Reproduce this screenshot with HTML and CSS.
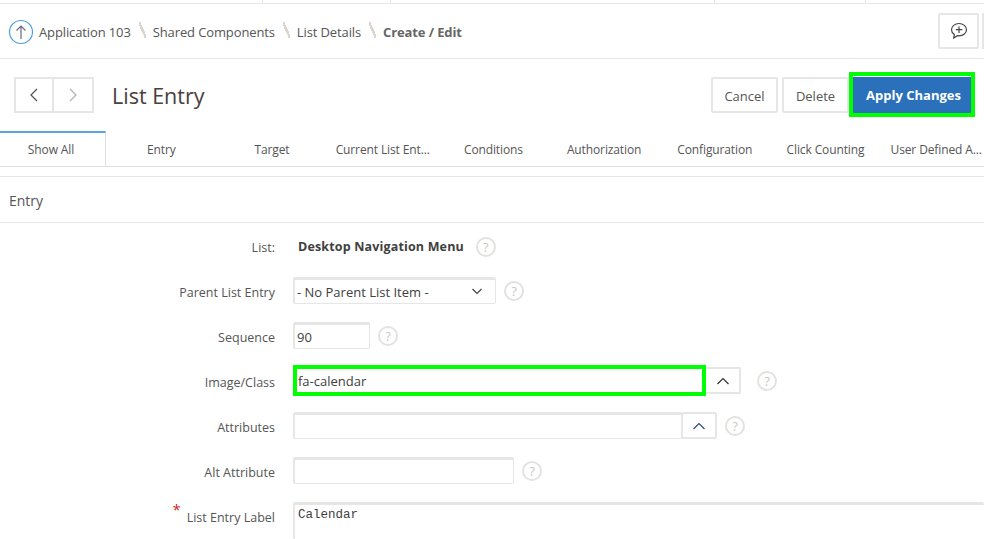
FILE: index.html
```html
<!DOCTYPE html>
<html lang="en">
<head>
  <meta charset="UTF-8">
  <title>List Entry</title>
  <link rel="stylesheet" href="styles.css">
</head>
<body>

  <div class="top-strip">
    <span class="strip-cell strip-a"></span>
    <span class="strip-cell strip-b"></span>
    <span class="strip-cell strip-c"></span>
    <span class="strip-cell strip-d"></span>
  </div>

  <div class="crumbs">
    <svg class="up-icon" width="26" height="26" viewBox="0 0 26 26">
      <circle cx="13" cy="13" r="11.5" fill="none" stroke="#4a9ee0" stroke-width="1.2"/>
      <path d="M13 20V7M8.5 11.5L13 7l4.5 4.5" fill="none" stroke="#6a6a80" stroke-width="1.2"/>
    </svg>
    <a class="crumb">Application 103</a>
    <span class="crumb-sep"></span>
    <a class="crumb">Shared Components</a>
    <span class="crumb-sep"></span>
    <a class="crumb">List Details</a>
    <span class="crumb-sep"></span>
    <a class="crumb crumb-current">Create / Edit</a>
    <div class="crumb-tools">
      <button class="tool-btn">
        <svg width="20" height="20" viewBox="0 0 20 20">
          <path d="M10 2.5c-4.2 0-7.5 2.8-7.5 6.3 0 2 1.100 3.700 2.800 4.800l-.6 3.400 3.700-2.300c.5.100 1 .1 1.600.1 4.200 0 7.500-2.800 7.500-6 0-3.500-3.300-6.300-7.500-6.300z" fill="none" stroke="#444" stroke-width="1.2"/>
          <path d="M10 5.500v6.500M6.800 8.700h6.500" fill="none" stroke="#444" stroke-width="1.2"/>
        </svg>
      </button>
      <span class="tool-edge"></span>
    </div>
  </div>

  <div class="title-bar">
    <div class="pager">
      <button class="pager-btn">
        <svg width="12" height="16" viewBox="0 0 12 16"><path d="M9 2L3 8l6 6" fill="none" stroke="#555" stroke-width="1.3"/></svg>
      </button>
      <button class="pager-btn">
        <svg width="12" height="16" viewBox="0 0 12 16"><path d="M3 2l6 6-6 6" fill="none" stroke="#b5b5b5" stroke-width="1.3"/></svg>
      </button>
    </div>
    <h1 class="page-title">List Entry</h1>
    <div class="actions">
      <button class="btn">Cancel</button>
      <button class="btn">Delete</button>
      <div class="highlight-btn"><button class="btn-primary">Apply Changes</button></div>
    </div>
  </div>

  <div class="tabs">
    <a class="tab tab-active">Show All</a>
    <a class="tab">Entry</a>
    <a class="tab">Target</a>
    <a class="tab">Current List Ent...</a>
    <a class="tab">Conditions</a>
    <a class="tab">Authorization</a>
    <a class="tab">Configuration</a>
    <a class="tab">Click Counting</a>
    <a class="tab">User Defined A...</a>
  </div>

  <h2 class="section-title">Entry</h2>

  <div class="form">
    <div class="row row-static">
      <label class="row-label">List:</label>
      <div class="row-field">
        <strong class="static-value">Desktop Navigation Menu</strong>
        <span class="help help-static">?</span>
      </div>
    </div>
    <div class="row">
      <label class="row-label">Parent List Entry</label>
      <div class="row-field">
        <div class="input select-input">
          <span>- No Parent List Item -</span>
          <svg width="10" height="7" viewBox="0 0 10 7"><path d="M.5 1L5 5.500 9.500 1" fill="none" stroke="#444" stroke-width="1.2"/></svg>
        </div>
        <span class="help">?</span>
      </div>
    </div>
    <div class="row">
      <label class="row-label">Sequence</label>
      <div class="row-field">
        <div class="input seq-input">90</div>
        <span class="help">?</span>
      </div>
    </div>
    <div class="row">
      <label class="row-label">Image/Class</label>
      <div class="row-field">
        <div class="input image-input">fa-calendar</div>
        <button class="lov-btn">
          <svg width="14" height="8" viewBox="0 0 14 8"><path d="M1.500 7L7 1.500 12.500 7" fill="none" stroke="#333" stroke-width="1.2"/></svg>
        </button>
        <span class="help help-image">?</span>
      </div>
    </div>
    <div class="row">
      <label class="row-label">Attributes</label>
      <div class="row-field">
        <div class="input attr-input"></div>
        <button class="lov-btn lov-attr">
          <svg width="14" height="8" viewBox="0 0 14 8"><path d="M1.500 7L7 1.500 12.500 7" fill="none" stroke="#2b4a80" stroke-width="1.2"/></svg>
        </button>
        <span class="help">?</span>
      </div>
    </div>
    <div class="row">
      <label class="row-label">Alt Attribute</label>
      <div class="row-field">
        <div class="input alt-input"></div>
        <span class="help">?</span>
      </div>
    </div>
    <div class="row row-top">
      <label class="row-label"><span class="req">*</span>List Entry Label</label>
      <div class="row-field">
        <div class="input area-input">Calendar</div>
      </div>
    </div>
  </div>

</body>
</html>
```

FILE: styles.css
```css
* {
  box-sizing: border-box;
}

html, body {
  height: 539px;
  overflow: hidden;
}

body {
  margin: 0;
  background: #fff;
  font-family: "Open Sans", "Noto Sans", sans-serif;
  font-size: 12.5px;
  color: #4c4c4c;
}

button {
  font-family: inherit;
  padding: 0;
  background: #fff;
  cursor: pointer;
}

/* top strip */
.top-strip {
  display: flex;
  height: 4px;
  border-bottom: 1px solid #e6e6e6;
}

.strip-cell {
  border-right: 1px solid #e6e6e6;
}

.strip-a { width: 263px; }
.strip-b { width: 128px; }
.strip-c { width: 324px; }
.strip-d { width: 151px; }

/* breadcrumb */
.crumbs {
  display: flex;
  align-items: center;
  height: 55px;
  padding: 2px 0 0 8px;
  border-bottom: 1px solid #e6e6e6;
  font-size: 13px;
  letter-spacing: -0.12px;
}

.up-icon {
  margin-right: 5px;
}

.crumb {
  color: #555;
}

.crumb-current {
  font-weight: 700;
  color: #666;
}

.crumb-sep {
  width: 7px;
  height: 16px;
  margin: 0 7px 4px 8px;
  background: linear-gradient(to top right, transparent 40%, #d9d5d0 40%, #d9d5d0 60%, transparent 60%);
}

.crumb-tools {
  display: flex;
  margin-left: auto;
  margin-top: -2px;
}

.tool-btn {
  display: flex;
  align-items: center;
  justify-content: center;
  width: 41px;
  height: 36px;
  border: 2px solid #e6e6e6;
  border-radius: 2px;
}

.tool-edge {
  width: 2px;
  height: 36px;
  margin-left: 3px;
  background: #e6e6e6;
}

/* title bar */
.title-bar {
  display: flex;
  align-items: center;
  height: 72px;
  padding: 0 9px 0 14px;
}

.pager {
  display: flex;
}

.pager-btn {
  display: flex;
  align-items: center;
  justify-content: center;
  width: 40px;
  height: 36px;
  border: 2px solid #e6e6e6;
}

.pager-btn + .pager-btn {
  border-left: 0;
}

.page-title {
  margin: 0 0 0 18px;
  font-size: 21.5px;
  font-weight: 400;
  color: #4a4040;
}

.actions {
  display: flex;
  align-items: center;
  margin-left: auto;
}

.btn {
  width: 67px;
  height: 36px;
  padding-top: 2px;
  border: 2px solid #e6e6e6;
  border-radius: 2px;
  font-size: 13px;
  color: #555;
}

.btn + .btn {
  margin-left: 4px;
}

.highlight-btn {
  width: 126px;
  height: 45px;
  margin-top: -1px;
  border: 4px solid #00ff00;
}

.btn-primary {
  width: 100%;
  height: 100%;
  padding-left: 3px;
  border: 0;
  border-top: 1px solid #fff;
  background: #2a70bb;
  color: #fff;
  font-size: 13px;
  font-weight: 700;
}

/* tabs */
.tabs {
  display: flex;
  height: 36px;
  border-bottom: 1px solid #e0e0e0;
}

.tab {
  display: flex;
  flex: 0 0 110.7px;
  align-items: center;
  justify-content: center;
  padding-top: 1px;
  white-space: nowrap;
  font-size: 12px;
  letter-spacing: -0.12px;
  color: #555;
}

.tab-active {
  flex-basis: 106px;
  padding-top: 0;
  padding-right: 3px;
  border-top: 2px solid #5ba5e0;
  border-right: 1px solid #e0e0e0;
}

/* section */
.section-title {
  height: 47px;
  margin: 9px 0 0;
  padding: 14px 0 0 9px;
  border-top: 1px solid #e6e6e6;
  border-bottom: 1px solid #e6e6e6;
  font-size: 14px;
  font-weight: 400;
  color: #555;
}

/* form */
.form {
  display: flex;
  flex-direction: column;
  padding-top: 1px;
}

.row {
  display: flex;
  align-items: center;
  flex: 0 0 45px;
  height: 45px;
}

.row-label {
  flex: 0 0 275px;
  padding-top: 2px;
  text-align: right;
  font-size: 12.5px;
  color: #555;
}

.row-field {
  display: flex;
  align-items: center;
  margin: -2px 0 0 18px;
}

.row-static .row-field {
  margin-top: 0;
}

.row-top {
  flex-basis: 47px;
  align-items: flex-start;
  height: 47px;
  padding-top: 8px;
}

.row-top .row-label {
  padding-top: 7px;
}

.row-top .row-field {
  margin-top: 0;
}

.req {
  margin-right: 6px;
  color: #d0261e;
  font-size: 15px;
  line-height: 0;
  vertical-align: 7px;
}

.static-value {
  margin-left: 5px;
  font-size: 12.5px;
  letter-spacing: 0.16px;
  color: #404040;
}

.input {
  display: flex;
  align-items: center;
  height: 27px;
  padding: 0 3px 0 2px;
  border: 1px solid #e6e6e6;
  border-top-width: 3px;
  border-left-width: 2px;
  border-radius: 2px;
  background: #fff;
  font-size: 13px;
  color: #404040;
}

.select-input {
  justify-content: space-between;
  width: 203px;
  padding-right: 13px;
}

.seq-input { width: 77px; }
.attr-input { width: 389px; }
.alt-input { width: 221px; }

.image-input {
  width: 413px;
  height: 31px;
  padding: 0 1px;
  border: 4px solid #00ff00;
  border-radius: 0;
}

.area-input {
  align-items: flex-start;
  width: 691px;
  height: 37px;
  padding: 3px 3px 0;
  border-right: 0;
  border-bottom: 0;
  font-family: "Liberation Mono", monospace;
  font-size: 12.5px;
}

.lov-btn {
  display: flex;
  align-items: center;
  justify-content: center;
  width: 35px;
  height: 27px;
  border: 2px solid #e6e6e6;
  border-left: 0;
  border-radius: 0 2px 2px 0;
}

.lov-attr {
  width: 36px;
  margin-left: -1px;
  border-left: 2px solid #e6e6e6;
}

.help {
  display: inline-flex;
  align-items: center;
  justify-content: center;
  width: 20px;
  height: 20px;
  margin-left: 8px;
  border: 2px solid #e4e2e0;
  border-radius: 50%;
  font-size: 13px;
  color: #c9c7c4;
}

.help-static {
  margin-left: 12px;
}

.help-image {
  margin-left: 16px;
}
```
